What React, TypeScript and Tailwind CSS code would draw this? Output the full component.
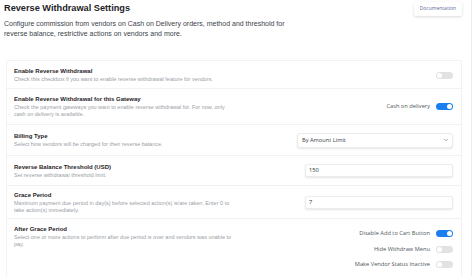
import { ChevronDown } from 'lucide-react';

interface ToggleProps {
  on?: boolean;
}

function Toggle({ on = false }: ToggleProps) {
  return (
    <div
      className={`flex h-[7px] w-[17px] shrink-0 items-center rounded-full px-[1px] ${
        on ? 'justify-end bg-[#1a7ef0]' : 'justify-start bg-[#e2e2e2]'
      }`}
    >
      <div className="h-[5px] w-[5px] rounded-full bg-white" />
    </div>
  );
}

interface FieldInfoProps {
  title: string;
  desc: string;
}

function FieldInfo({ title, desc }: FieldInfoProps) {
  return (
    <div className="w-[222px] shrink-0">
      <p className="mb-[1px] text-[6px] font-bold leading-[8px] text-[#1f2328]">{title}</p>
      <p className="text-[5.5px] leading-[7px] text-[#9aa0a6]">{desc}</p>
    </div>
  );
}

const rightFont = { fontFamily: '"Open Sans", "Noto Sans", sans-serif' };

export default function App() {
  return (
    <div
      className="h-[276px] w-[474px] overflow-hidden bg-white"
      style={{ fontFamily: '"Liberation Sans", Arial, sans-serif' }}
    >
      <div className="h-full w-[472px] border-r border-[#ececec]">
        {/* 头部 */}
        <div className="flex items-start justify-between pl-[4px] pr-[9px] pt-[2px]">
          <div>
            <h1 className="mt-[1px] text-[9.2px] font-bold leading-[11px] text-[#1d2327]">
              Reverse Withdrawal Settings
            </h1>
            <p className="mt-[5px] w-[285px] text-[7px] leading-[10px] text-[#3c434a]">
              Configure commission from vendors on Cash on Delivery orders, method and threshold for
              reverse balance, restrictive actions on vendors and more.
            </p>
          </div>
          <button
            className="h-[14px] rounded-[2px] bg-white px-[6px] text-[5px] text-[#5b6b9a] shadow-[0_1px_3px_rgba(0,0,0,0.15)]"
            style={rightFont}
          >
            Documentation
          </button>
        </div>

        {/* 设置卡片 */}
        <div className="ml-[6px] mt-[21px] w-[456px] rounded-t-[3px] border border-b-0 border-[#f2f2f2]">
          <div className="flex h-[28px] items-center justify-between border-b border-[#f2f2f2] pl-[7px] pr-[8px] pt-[1px]">
            <FieldInfo
              title="Enable Reverse Withdrawal"
              desc="Check this checkbox if you want to enable reverse withdrawal feature for vendors."
            />
            <Toggle />
          </div>

          <div className="flex h-[36px] items-center justify-between border-b border-[#f2f2f2] pl-[7px] pr-[8px]">
            <FieldInfo
              title="Enable Reverse Withdrawal for this Gateway"
              desc="Check the payment gateways you want to enable reverse withdrawal for. For now, only cash on delivery is available."
            />
            <div className="flex items-center gap-[6px]" style={rightFont}>
              <span className="text-[5.7px] text-[#50575e]">Cash on delivery</span>
              <Toggle on />
            </div>
          </div>

          <div className="flex h-[31px] items-center justify-between border-b border-[#f2f2f2] pl-[7px] pr-[8px]">
            <FieldInfo
              title="Billing Type"
              desc="Select how vendors will be charged for their reverse balance."
            />
            <div
              className="flex h-[15px] w-[156px] items-center justify-between rounded-[3px] border border-[#ececec] bg-white pl-[4px] pr-[3px] shadow-[0_1px_2px_rgba(0,0,0,0.1)]"
              style={rightFont}
            >
              <span className="text-[5.7px] text-[#3c434a]">By Amount Limit</span>
              <ChevronDown size={6} strokeWidth={2} className="text-[#50575e]" />
            </div>
          </div>

          <div className="flex h-[30px] items-center justify-between border-b border-[#f2f2f2] pl-[7px] pr-[8px]">
            <FieldInfo
              title="Reverse Balance Threshold (USD)"
              desc="Set reverse withdrawal threshold limit."
            />
            <div
              className="flex h-[13px] w-[148px] items-center rounded-[2px] border border-[#ececec] bg-white pl-[3px] shadow-[0_1px_2px_rgba(0,0,0,0.1)]"
              style={rightFont}
            >
              <span className="text-[5.7px] text-[#2c3338]">150</span>
            </div>
          </div>

          <div className="flex h-[33px] items-center justify-between border-b border-[#f2f2f2] pl-[7px] pr-[8px]">
            <FieldInfo
              title="Grace Period"
              desc="Maximum payment due period in day(s) before selected action(s) is/are taken. Enter 0 to take action(s) immediately."
            />
            <div
              className="flex h-[13px] w-[148px] items-center rounded-[2px] border border-[#ececec] bg-white pl-[3px] shadow-[0_1px_2px_rgba(0,0,0,0.1)]"
              style={rightFont}
            >
              <span className="text-[5.7px] text-[#2c3338]">7</span>
            </div>
          </div>

          <div className="flex h-[60px] items-start justify-between pl-[7px] pr-[8px] pt-[6px]">
            <FieldInfo
              title="After Grace Period"
              desc="Select one or more actions to perform after due period is over and vendors was unable to pay."
            />
            <div className="mt-[5px] flex flex-col items-end gap-[8.5px]" style={rightFont}>
              <div className="flex items-center gap-[6px]">
                <span className="text-[5.7px] leading-[7px] text-[#50575e]">Disable Add to Cart Button</span>
                <Toggle on />
              </div>
              <div className="flex items-center gap-[6px]">
                <span className="text-[5.7px] leading-[7px] text-[#50575e]">Hide Withdraw Menu</span>
                <Toggle />
              </div>
              <div className="flex items-center gap-[6px]">
                <span className="text-[5.7px] leading-[7px] text-[#50575e]">Make Vendor Status Inactive</span>
                <Toggle />
              </div>
            </div>
          </div>
        </div>
      </div>
    </div>
  );
}
